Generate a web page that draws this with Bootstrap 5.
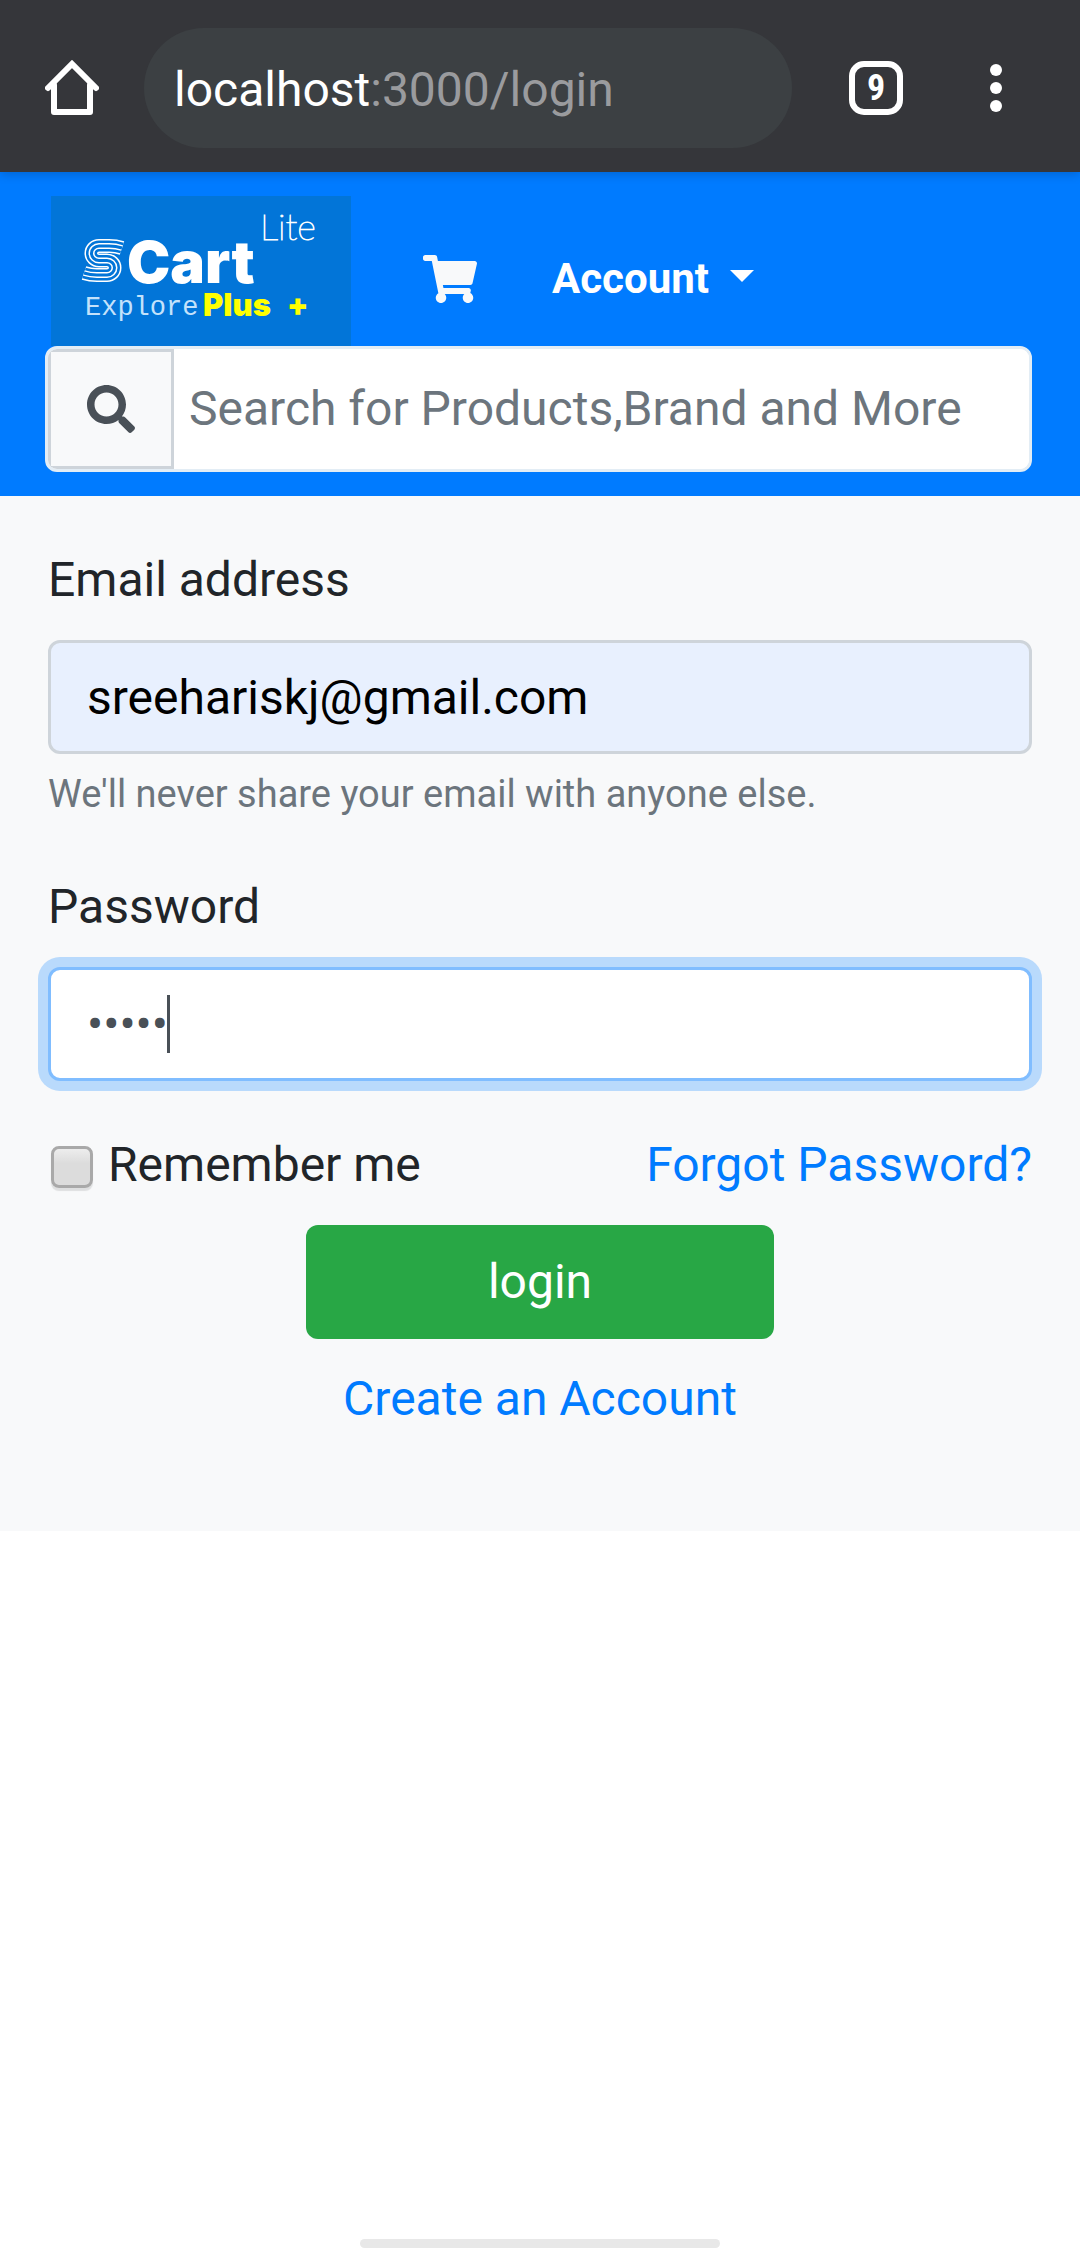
<!DOCTYPE html>
<html lang="en">
<head>
<meta charset="utf-8">
<meta name="viewport" content="width=device-width, initial-scale=1">
<title>SCart Lite - Login</title>
<link href="https://cdn.jsdelivr.net/npm/bootstrap@5.3.0/dist/css/bootstrap.min.css" rel="stylesheet">
<style>
  :root { --gap: 24px; --gutter: 48px; }
  body { font-family: Roboto, "Liberation Sans", sans-serif; font-size: 48px; line-height: 72px; color: #212529; background: #fff; }
  a { color: #007bff; text-decoration: none; }

  .browser-bar { background: #35363a; padding: 28px 78px 24px 45px; box-shadow: 0 2px 10px rgba(0,0,0,.2); z-index: 1; }
  .address { background: #3c4043; border-radius: 60px; height: 120px; padding: 4px 30px 0; margin: 0 57px 0 45px; color: #9a9b9e; }
  .address strong { color: #fff; font-weight: 400; }
  .icon-btn { border: 0; background: none; padding: 0; line-height: 0; color: #fff; }
  .tab-count { width: 54px; height: 54px; border: 6px solid #fff; border-radius: 15px; font-size: 36px; font-weight: 700; line-height: 42px; font-family: "Roboto Condensed", Roboto, sans-serif; margin-right: 87px; }

  .shop-header { background: #007bff; padding: var(--gap) var(--gutter); }
  .brand { margin-left: 3px; line-height: 0; }
  .nav-tools { padding-top: 15px; }
  .cart-link { margin-left: 72px; line-height: 0; color: #f8f9fa; }
  .account-btn { margin-left: 75px; font-size: 42px; font-weight: 700; line-height: 63px; color: #fff; border: 0; background: none; padding: 0; gap: 21px; }
  .account-btn::after { margin: -6px 0 0; border-top: 12px solid; border-left: 12px solid transparent; border-right: 12px solid transparent; }

  .search-box { margin-left: -3px; border-radius: 12px; border: 3px solid #e3edf5; background: #fff; height: 126px; overflow: hidden; }
  .search-btn { width: 126px; border: 3px solid #ced4da; background: #f8f9fa; color: #495057; line-height: 0; padding: 0; }
  .search-input { border: 0; border-radius: 0; font-size: 48px; line-height: 72px; padding: 0 15px; color: #495057; }
  .search-input::placeholder { color: #6c757d; opacity: 1; }

  .login-area { background: #f8f9fa; padding: var(--gutter) var(--gutter) 96px; }
  .field + .field, .options { margin-top: var(--gutter); }
  .field label { display: block; margin-bottom: var(--gap); }
  .field .form-control { border: 3px solid #ced4da; border-radius: 12px; padding: 18px 36px; font-size: 48px; line-height: 72px; height: 114px; color: #495057; }
  .field .filled { background: #e8f0fe; color: #000; }
  .field .active-field { border-color: #80bdff; box-shadow: 0 0 0 10px #b9dafc; }
  .caret-line { position: absolute; left: 119px; top: 28px; width: 3px; height: 58px; background: #495057; }
  .hint { font-size: 38px; line-height: 57px; color: #6c757d; margin-top: 12px; }
  .remember { appearance: none; width: 42px; height: 42px; margin: 4px 15px 0 3px; border: 3px solid #a9a9a9; border-radius: 8px; background: linear-gradient(#ededed, #dcdcdc 40%); box-shadow: 0 3px 1px rgba(0,0,0,.1); }
  .login-btn { width: 468px; max-width: 100%; height: 114px; background: #28a745; color: #fff; border: 0; border-radius: 12px; font-size: 48px; line-height: 72px; }
  .home-pill { width: 360px; height: 9px; border-radius: 5px; background: #e8e8e8; }
</style>
</head>
<body class="d-flex flex-column min-vh-100">

<div class="browser-bar d-flex align-items-center">
  <button class="icon-btn" type="button" aria-label="Home">
    <svg width="54" height="56" viewBox="0 0 54 56" fill="none" stroke="#fff" stroke-width="6" stroke-linejoin="round" stroke-linecap="round"><path d="M3 28 27 4 51 28" stroke-linejoin="miter"/><path d="M9 25V52H45V25"/></svg>
  </button>
  <div class="address flex-grow-1 d-flex align-items-center"><strong>localhost</strong><span>:3000/login</span></div>
  <button class="icon-btn tab-count" type="button">9</button>
  <button class="icon-btn" type="button" aria-label="Menu">
    <svg width="12" height="50" viewBox="0 0 12 50" fill="#fff"><circle cx="6" cy="7" r="6"/><circle cx="6" cy="25" r="6"/><circle cx="6" cy="43" r="6"/></svg>
  </button>
</div>

<header class="shop-header">
  <div class="d-flex align-items-center">
    <a class="brand" href="#">
      <svg width="300" height="150" viewBox="0 0 300 150" role="img" aria-label="SCart Lite, Explore Plus">
        <defs><path id="stripe-s" d="M38 9Q32 7 25 7H15A7.500 7.250 0 0 0 15 21.500H23A7.500 7.250 0 0 1 23 36H13Q6 36 0 34"/></defs>
        <rect width="300" height="150" fill="#0275d8"/>
        <g transform="translate(33 43)" fill="none">
          <use href="#stripe-s" stroke="#fff" stroke-width="14"/>
          <use href="#stripe-s" stroke="#0275d8" stroke-width="11"/>
          <use href="#stripe-s" stroke="#fff" stroke-width="6"/>
          <use href="#stripe-s" stroke="#0275d8" stroke-width="3"/>
        </g>
        <text x="76" y="87" font-family="Inter, sans-serif" font-weight="900" font-size="58" fill="#fff">Cart</text>
        <text x="209" y="44" font-family="Lato, sans-serif" font-weight="100" font-size="36" fill="#fff" stroke="#fff" stroke-width="1">Lite</text>
        <text x="34" y="119" font-family="Liberation Mono, monospace" font-size="27" fill="#c4e2fb">Explore</text>
        <text x="152" y="120" font-family="Inter, sans-serif" font-weight="900" font-size="31" fill="#ff0">Plus <tspan x="236">+</tspan></text>
      </svg>
    </a>
    <div class="nav-tools d-flex align-items-center">
      <a class="cart-link" href="#" aria-label="Cart">
        <svg width="54" height="48" viewBox="0 0 576 512" fill="currentColor"><path d="M528.120 301.319l47.273-208C578.806 78.301 567.391 64 551.990 64H159.208l-9.166-44.810C147.758 8.021 137.930 0 126.529 0H24C10.745 0 0 10.745 0 24v16c0 13.255 10.745 24 24 24h69.883l70.248 343.435C147.325 417.100 136 435.222 136 456c0 30.928 25.072 56 56 56s56-25.072 56-56c0-15.674-6.447-29.835-16.824-40h209.647C430.447 426.165 424 440.326 424 456c0 30.928 25.072 56 56 56s56-25.072 56-56c0-22.172-12.888-41.332-31.579-50.405l5.517-24.276c3.413-15.018-8.002-29.319-23.403-29.319H218.117l-6.545-32h293.145c11.206 0 20.920-7.754 23.403-18.681z"/></svg>
      </a>
      <button class="account-btn dropdown-toggle d-flex align-items-center" type="button" data-bs-toggle="dropdown">Account</button>
    </div>
  </div>
  <form class="search-box d-flex" role="search">
    <button class="search-btn flex-shrink-0" type="button" aria-label="Search">
      <svg width="48" height="48" viewBox="0 0 512 512" fill="currentColor"><path d="M505 442.700L405.300 343c-4.500-4.500-10.600-7-17-7H372c27.600-35.300 44-79.700 44-128C416 93.100 322.900 0 208 0S0 93.100 0 208s93.100 208 208 208c48.300 0 92.700-16.400 128-44v16.300c0 6.400 2.500 12.500 7 17l99.700 99.700c9.400 9.400 24.600 9.400 33.900 0l28.300-28.300c9.400-9.400 9.400-24.600.1-34zM208 336c-70.700 0-128-57.200-128-128 0-70.700 57.200-128 128-128 70.700 0 128 57.200 128 128 0 70.700-57.200 128-128 128z"/></svg>
    </button>
    <input class="form-control search-input" type="search" aria-label="Search" placeholder="Search for Products,Brand and More">
  </form>
</header>

<main class="login-area">
  <form>
    <div class="field">
      <label for="email">Email address</label>
      <input class="form-control filled" id="email" type="email" value="sreehariskj@gmail.com">
      <div class="hint">We'll never share your email with anyone else.</div>
    </div>
    <div class="field">
      <label for="password">Password</label>
      <div class="position-relative">
        <input class="form-control active-field" id="password" type="password" value="12345">
        <span class="caret-line"></span>
      </div>
    </div>
    <div class="options d-flex justify-content-between">
      <div class="d-flex align-items-center">
        <input class="remember" id="remember" type="checkbox">
        <label for="remember">Remember me</label>
      </div>
      <a href="#">Forgot Password?</a>
    </div>
    <div class="d-flex flex-column align-items-center gap-4 pt-4">
      <button class="btn login-btn" type="submit">login</button>
      <a href="#">Create an Account</a>
    </div>
  </form>
</main>

<div class="home-pill mt-auto mx-auto"></div>

<script src="https://cdn.jsdelivr.net/npm/bootstrap@5.3.0/dist/js/bootstrap.bundle.min.js"></script>
</body>
</html>
